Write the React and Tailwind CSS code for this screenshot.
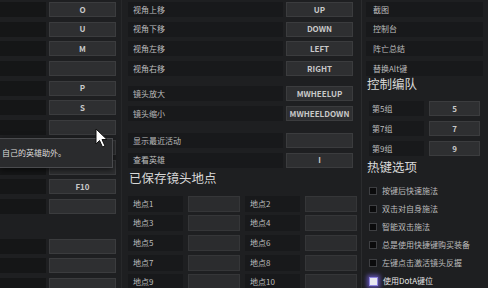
import React from "react";

const F = { fontFamily: '"Noto Sans CJK SC", "Noto Sans", sans-serif' };

function Btn({ children, className = "" }) {
  return (
    <div
      className={`h-[15px] flex items-center justify-center bg-[#2e2f31] border border-[#3b3c3e] text-[8px] font-bold text-[#c9c9c9] leading-none ${className}`}
    >
      {children}
    </div>
  );
}

function LeftRow({ k }) {
  return (
    <div className="flex h-[15px] gap-[3px]">
      <div className="w-[46px] h-full bg-[#151617]" />
      <Btn className="w-[67px]">{k}</Btn>
    </div>
  );
}

function MidRow({ label, k }) {
  return (
    <div className="flex h-[15px] gap-[3px]">
      <div className="w-[155px] h-full bg-[#18191b] flex items-center pl-[5px] text-[8px] text-[#bdbdbd]">
        {label}
      </div>
      <Btn className="w-[67px]">{k}</Btn>
    </div>
  );
}

function PlaceRow({ label }) {
  return (
    <div className="flex h-[16px] gap-[5px]">
      <div className="w-[55px] h-full bg-[#18191b] flex items-center pl-[5px] text-[8px] text-[#bdbdbd]">
        {label}
      </div>
      <div className="w-[52px] h-full bg-[#2b2c2e] border border-[#353638]" />
    </div>
  );
}

function RightRow({ label }) {
  return (
    <div className="h-[15px] bg-[#18191b] flex items-center pl-[7px] text-[8px] text-[#bdbdbd] mr-[5px]">
      {label}
    </div>
  );
}

function GroupRow({ label, k }) {
  return (
    <div className="flex h-[15px] gap-[5px] pl-[7px]">
      <div className="w-[55px] h-full bg-[#18191b] flex items-center pl-[3px] text-[8px] text-[#bdbdbd]">
        {label}
      </div>
      <Btn className="w-[51px]">{k}</Btn>
    </div>
  );
}

function Check({ label, on }) {
  return (
    <div className="flex items-center gap-[5px] h-[18px] pl-[7px] text-[8px] text-[#bdbdbd]">
      {on ? (
        <div className="w-[9px] h-[9px] bg-[#e8e8f0] border border-[#8f86e0] shadow-[0_0_4px_2px_rgba(120,100,230,0.7)]" />
      ) : (
        <div className="w-[8px] h-[8px] bg-[#0b0b0c] border border-[#3e3f42]" />
      )}
      <span className={on ? "text-[#e6e6e6]" : ""}>{label}</span>
    </div>
  );
}

export default function App() {
  return (
    <div
      className="relative w-[488px] h-[288px] overflow-hidden bg-[#1e1f21] flex"
      style={F}
    >
      {/* Left column */}
      <div className="w-[122px] shrink-0 flex flex-col pt-[2px] border-r border-[#27282a]">
        <div className="flex flex-col gap-[4.7px]">
          <LeftRow k="O" />
          <LeftRow k="U" />
          <LeftRow k="M" />
          <LeftRow k="" />
          <LeftRow k="P" />
          <LeftRow k="S" />
          <LeftRow k="" />
          <LeftRow k="" />
          <LeftRow k="" />
          <LeftRow k="F10" />
          <LeftRow k="" />
        </div>
        <div className="mt-[18px] h-px bg-[#3a3b3d] mr-[6px]" />
        <div className="mt-[7px] flex flex-col gap-[4.5px]">
          <LeftRow k="" />
          <LeftRow k="" />
          <LeftRow k="" />
        </div>
      </div>

      {/* Middle column */}
      <div className="w-[240px] shrink-0 flex flex-col pl-[6px] pt-[2px] border-r border-[#2b2c2e]">
        <div className="flex flex-col gap-[4.7px]">
          <MidRow label="视角上移" k="UP" />
          <MidRow label="视角下移" k="DOWN" />
          <MidRow label="视角左移" k="LEFT" />
          <MidRow label="视角右移" k="RIGHT" />
        </div>
        <div className="flex flex-col gap-[5px] mt-[10px]">
          <MidRow label="镜头放大" k="MWHEELUP" />
          <MidRow label="镜头缩小" k="MWHEELDOWN" />
        </div>
        <div className="flex flex-col gap-[4.5px] mt-[12px]">
          <MidRow label="显示最近活动" k="" />
          <MidRow label="查看英雄" k="I" />
        </div>
        <div className="mt-[1px] text-[12.5px] text-[#d8d8d8] leading-[17px] pl-[1px]">
          已保存镜头地点
        </div>
        <div className="h-px bg-[#3a3b3d] mr-[4px] mt-[1px]" />
        <div className="flex mt-[9px] gap-[5px]">
          <div className="flex flex-col gap-[3.7px]">
            <PlaceRow label="地点1" />
            <PlaceRow label="地点3" />
            <PlaceRow label="地点5" />
            <PlaceRow label="地点7" />
            <PlaceRow label="地点9" />
          </div>
          <div className="flex flex-col gap-[3.7px]">
            <PlaceRow label="地点2" />
            <PlaceRow label="地点4" />
            <PlaceRow label="地点6" />
            <PlaceRow label="地点8" />
            <PlaceRow label="地点10" />
          </div>
        </div>
      </div>

      {/* Right column */}
      <div className="flex-1 flex flex-col pt-[2px]">
        <div className="flex flex-col gap-[4.7px] pl-[4px]">
          <RightRow label="截图" />
          <RightRow label="控制台" />
          <RightRow label="阵亡总结" />
          <RightRow label="替换Alt键" />
        </div>
        <div className="mt-[-1px] text-[12.5px] text-[#d8d8d8] leading-[17px] pl-[5px]">
          控制编队
        </div>
        <div className="h-px bg-[#3a3b3d] mx-[4px] mt-[3px]" />
        <div className="flex flex-col gap-[5px] mt-[6px]">
          <GroupRow label="第5组" k="5" />
          <GroupRow label="第7组" k="7" />
          <GroupRow label="第9组" k="9" />
        </div>
        <div className="mt-[2px] text-[12.5px] text-[#d8d8d8] leading-[17px] pl-[5px]">
          热键选项
        </div>
        <div className="h-px bg-[#3a3b3d] mx-[4px] mt-[1px]" />
        <div className="flex flex-col mt-[6px]">
          <Check label="按键后快速施法" />
          <Check label="双击对自身施法" />
          <Check label="智能双击施法" />
          <Check label="总是使用快捷键购买装备" />
          <Check label="左键点击激活镜头反握" />
          <Check label="使用DotA键位" on />
        </div>
      </div>

      {/* Tooltip */}
      <div className="absolute left-0 top-[138px] w-[113px] h-[30px] bg-[#2a2b2d] border border-[#4a4b4e] border-l-0 flex items-center pl-[2px] text-[8px] text-[#dcdcdc] shadow-[0_2px_6px_rgba(0,0,0,0.6)]">
        自己的英雄助外。
      </div>

      {/* Cursor */}
      <svg
        className="absolute left-[95px] top-[128px]"
        width="14"
        height="20"
        viewBox="0 0 14 20"
      >
        <path
          d="M1 1 L1 16 L4.5 12.5 L7.5 19 L10 18 L7 11.5 L12 11.5 Z"
          fill="#ffffff"
          stroke="#111"
          strokeWidth="1"
        />
      </svg>
    </div>
  );
}
